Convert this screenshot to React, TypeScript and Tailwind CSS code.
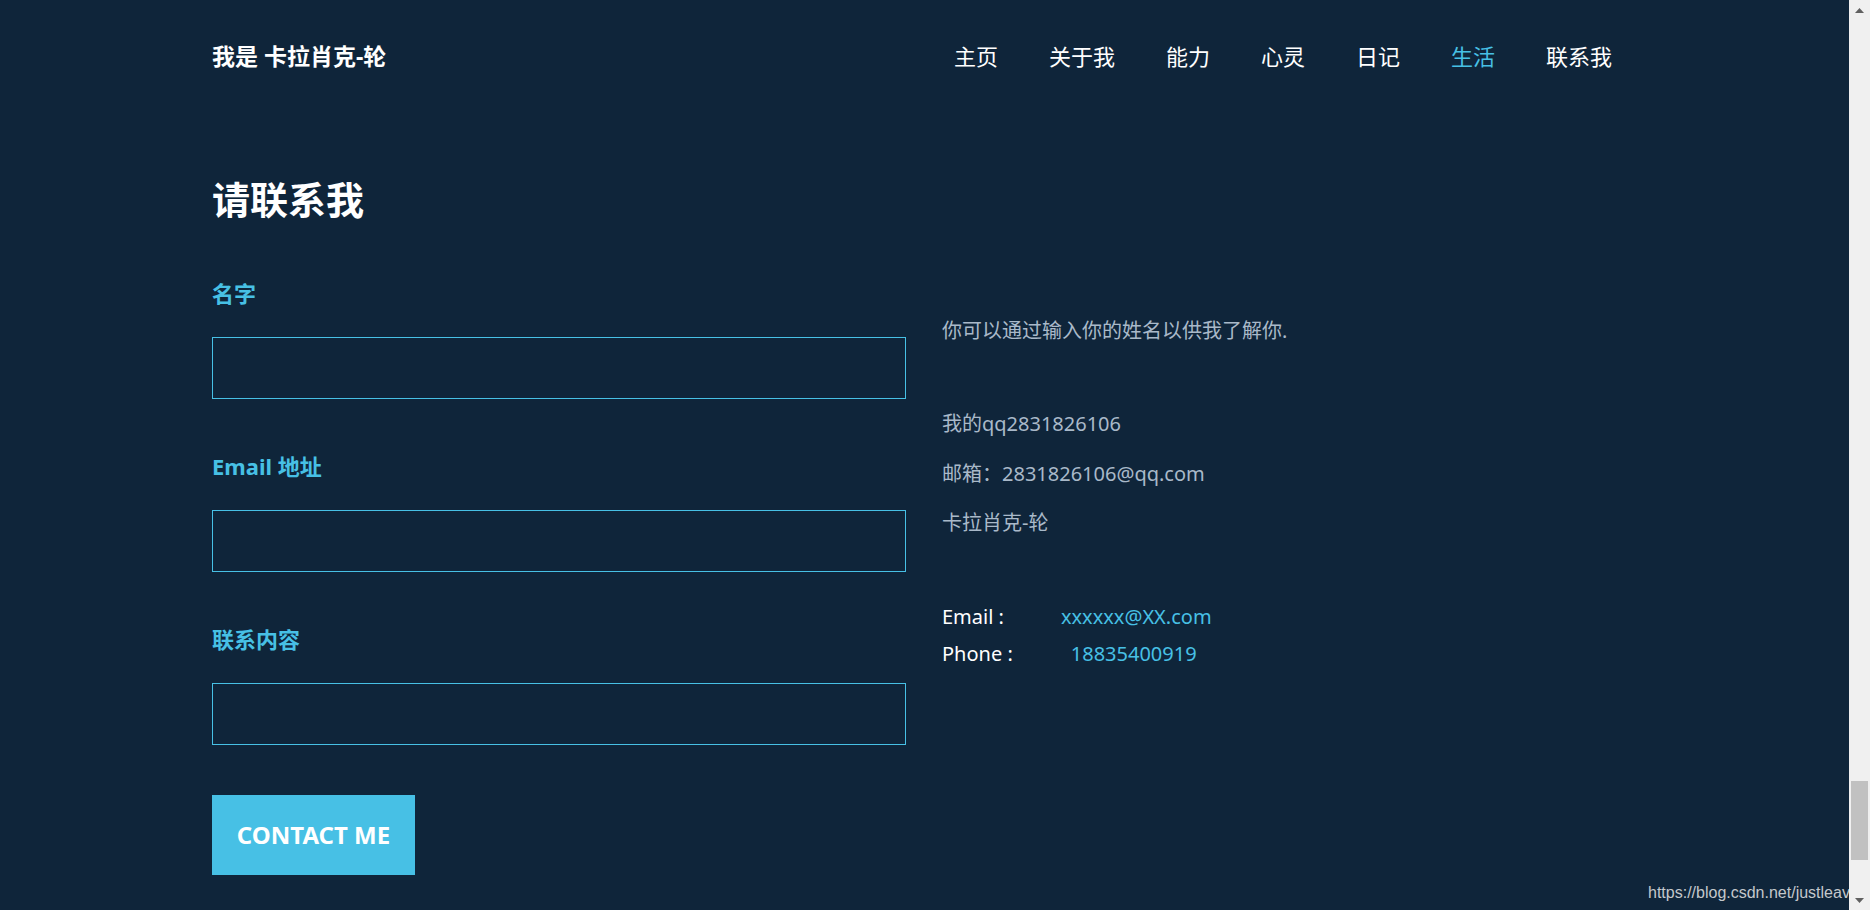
import React from 'react';

const navItems = ['主页', '关于我', '能力', '心灵', '日记', '生活', '联系我'];

const fields = ['名字', 'Email 地址', '联系内容'];

function Field({ label, first }: { label: string; first: boolean }) {
  return (
    <div className={first ? 'mt-[64px]' : 'mt-[56px]'}>
      <label className="block text-[22px] leading-none font-bold text-[#47c0e5]">
        {label}
      </label>
      <input
        type="text"
        className="mt-[33px] block w-[694px] h-[62px] bg-transparent border border-[#47c0e5] outline-none text-white px-3"
      />
    </div>
  );
}

function ScrollBar() {
  return (
    <div className="w-[21px] h-full bg-[#f0f0f0] flex flex-col">
      <div className="h-[20px] flex items-center justify-center">
        <svg width="9" height="5" viewBox="0 0 9 5">
          <path d="M0 5L4.5 0L9 5Z" fill="#606060" />
        </svg>
      </div>
      <div className="flex-1 flex flex-col justify-end pl-[2px] pr-[2px] pb-[30px]">
        <div className="h-[79px] bg-[#c1c1c1]" />
      </div>
      <div className="h-[20px] flex items-center justify-center">
        <svg width="9" height="5" viewBox="0 0 9 5">
          <path d="M0 0L4.5 5L9 0Z" fill="#606060" />
        </svg>
      </div>
    </div>
  );
}

export default function App() {
  return (
    <div
      className="w-full h-[910px] flex bg-[#0f253a] overflow-hidden"
      style={{ fontFamily: '"Noto Sans", "Noto Sans CJK SC", sans-serif' }}
    >
      <div className="relative flex-1 overflow-hidden">
        <div className="ml-[212px] w-[1400px]">
          {/* header */}
          <header className="h-[112px] flex items-center">
            <div className="text-[23px] font-bold text-white">我是 卡拉肖克-轮</div>
            <nav className="ml-auto flex gap-[51px] text-[22px] text-white">
              {navItems.map((item) => (
                <a
                  key={item}
                  className={item === '生活' ? 'text-[#47c0e5]' : 'text-white'}
                >
                  {item}
                </a>
              ))}
            </nav>
          </header>

          <h1 className="mt-[68px] text-[38px] leading-none font-bold text-white">
            请联系我
          </h1>

          <div className="flex gap-[36px]">
            <form className="w-[694px]">
              {fields.map((f, i) => (
                <Field key={f} label={f} first={i === 0} />
              ))}
              <button
                type="button"
                className="mt-[50px] w-[203px] h-[80px] bg-[#47c0e5] text-white text-[24px] font-bold"
              >
                CONTACT ME
              </button>
            </form>

            <div className="text-[20px] leading-none text-[#a9b9c9]">
              <p className="mt-[103px]">你可以通过输入你的姓名以供我了解你.</p>
              <p className="mt-[73px]">我的qq2831826106</p>
              <p className="mt-[30px]">邮箱：2831826106@qq.com</p>
              <p className="mt-[29px]">卡拉肖克-轮</p>
              <p className="mt-[74px] text-white">
                Email :<span className="ml-[57px] text-[#47c0e5]">xxxxxx@XX.com</span>
              </p>
              <p className="mt-[17px] text-white">
                Phone :<span className="ml-[58px] text-[#47c0e5]">18835400919</span>
              </p>
            </div>
          </div>
        </div>

        <div
          className="absolute left-[1648px] top-[881px] whitespace-nowrap text-[16px] text-[#c4c8cc]"
          style={{ fontFamily: '"Liberation Sans", sans-serif' }}
        >
          https://blog.csdn.net/justleavel
        </div>
      </div>
      <ScrollBar />
    </div>
  );
}
